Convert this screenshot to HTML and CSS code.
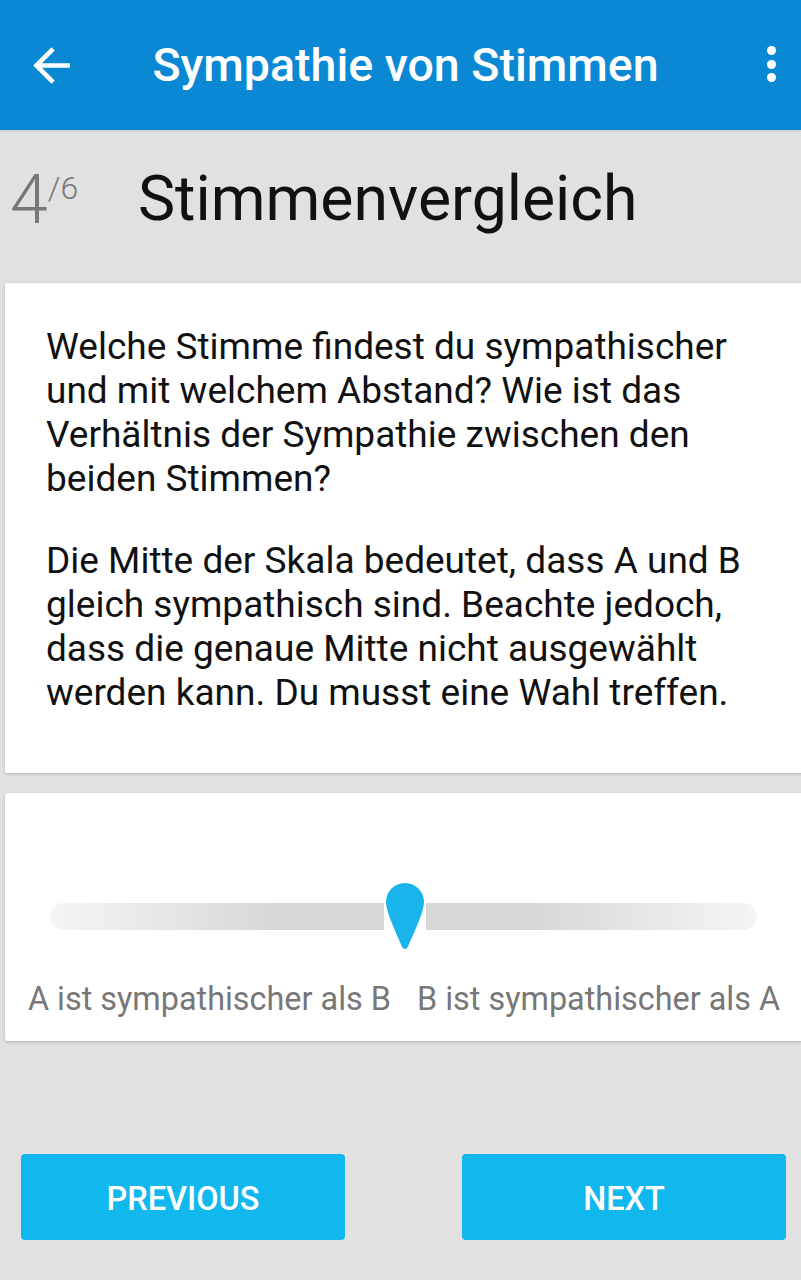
FILE: index.html
```html
<!DOCTYPE html>
<html lang="de">
<head>
<meta charset="utf-8">
<title>Sympathie von Stimmen</title>
<link rel="stylesheet" href="styles.css">
</head>
<body>
<header class="appbar">
  <div class="appbar-side">
    <svg class="icon-back" viewBox="0 0 24 24" width="55" height="55"><path fill="#fff" d="M20 11H7.83l5.59-5.59L12 4l-8 8 8 8 1.41-1.41L7.83 13H20v-2z"/></svg>
  </div>
  <h1 class="appbar-title">Sympathie von Stimmen</h1>
  <div class="appbar-side appbar-right">
    <span class="dots"><i></i><i></i><i></i></span>
  </div>
</header>

<div class="step-row">
  <div class="step"><span class="step-num">4</span><span class="step-total">/6</span></div>
  <h2 class="step-title">Stimmenvergleich</h2>
</div>

<section class="card card-text">
  <p>Welche Stimme findest du sympathischer<br>und mit welchem Abstand? Wie ist das<br>Verhältnis der Sympathie zwischen den<br>beiden Stimmen?</p>
  <p>Die Mitte der Skala bedeutet, dass A und B<br>gleich sympathisch sind. Beachte jedoch,<br>dass die genaue Mitte nicht ausgewählt<br>werden kann. Du musst eine Wahl treffen.</p>
</section>

<section class="card card-slider">
  <div class="slider">
    <div class="track"></div>
    <svg class="thumb" viewBox="-2 0 42 67" width="42" height="67">
      <rect x="-2" y="20" width="42" height="27" fill="#fff"/>
      <path fill="#1ab4ec" d="M19 0C29.5 0 38 8.5 38 19C38 30 24.5 57 21.8 64C20.8 66.6 17.2 66.6 16.2 64C13.5 57 0 30 0 19C0 8.5 8.5 0 19 0Z"/>
    </svg>
  </div>
  <div class="labels">
    <span class="label-left">A ist sympathischer als B</span>
    <span class="label-right">B ist sympathischer als A</span>
  </div>
</section>

<nav class="buttons">
  <button class="btn">PREVIOUS</button>
  <button class="btn">NEXT</button>
</nav>
</body>
</html>
```

FILE: styles.css
```css
html, body {
  margin: 0;
  padding: 0;
}
body {
  width: 801px;
  height: 1280px;
  overflow: hidden;
  background: #e1e1e1;
  font-family: Roboto, "Noto Sans", "Liberation Sans", sans-serif;
}

.appbar {
  height: 130px;
  background: #0a88d3;
  display: flex;
  align-items: center;
  box-shadow: 0 1px 2px rgba(0,0,0,0.12);
}
.appbar-side {
  width: 80px;
  height: 130px;
  display: flex;
  align-items: center;
}
.icon-back {
  display: block;
  margin-left: 24px;
}
.appbar-right {
  justify-content: flex-end;
}
.dots {
  display: flex;
  flex-direction: column;
  gap: 4.5px;
  margin-right: 25px;
  margin-top: -2px;
}
.dots i {
  display: block;
  width: 9px;
  height: 9px;
  border-radius: 50%;
  background: #fff;
}
.appbar-title {
  flex: 1;
  margin: 0;
  padding-left: 10px;
  text-align: center;
  color: #fff;
  font-weight: 500;
  font-size: 46.5px;
  line-height: 1;
}

.step-row {
  height: 153px;
  display: flex;
  align-items: center;
}
.step {
  width: 138px;
  padding-left: 10px;
  box-sizing: border-box;
  color: #777;
  font-weight: 300;
  display: flex;
  align-items: flex-start;
  margin-top: -14px;
}
.step-num {
  font-size: 68px;
  line-height: 1;
}
.step-total {
  font-size: 32px;
  line-height: 1;
  margin-top: 6px;
}
.step-title {
  margin: 0;
  margin-top: -14px;
  font-weight: 400;
  font-size: 62.5px;
  line-height: 1;
  color: #111;
}

.card {
  background: #fff;
  margin-left: 5px;
  width: 798px;
  box-sizing: border-box;
  border-radius: 2px;
  box-shadow: 0 1px 3px rgba(0,0,0,0.22);
}
.card-text {
  height: 490px;
  padding: 42px 0 0 41px;
  color: #111;
  font-size: 37px;
  line-height: 44px;
}
.card-text p {
  margin: 0 0 38px 0;
}

.card-slider {
  margin-top: 20px;
  height: 248px;
  padding-top: 90px;
}
.slider {
  position: relative;
  margin-left: 45px;
  width: 707px;
  height: 67px;
}
.track {
  position: absolute;
  left: 0;
  right: 0;
  top: 20px;
  height: 27px;
  border-radius: 14px;
  background: linear-gradient(to right, #f5f5f5 0%, #d7d7d7 32%, #d7d7d7 68%, #f5f5f5 100%);
}
.thumb {
  position: absolute;
  left: 334px;
  top: 0;
  display: block;
}
.labels {
  display: grid;
  grid-template-columns: 1fr 1fr;
  column-gap: 26px;
  margin-top: 29px;
  color: #777;
  font-size: 32.4px;
  line-height: 40px;
}
.label-left { text-align: right; }
.label-right { text-align: left; }

.buttons {
  display: flex;
  justify-content: space-between;
  padding: 0 15px 0 21px;
  margin-top: 113px;
}
.btn {
  width: 324px;
  height: 86px;
  border: 0;
  border-radius: 4px;
  background: #10b8ee;
  color: #fff;
  font-family: Roboto, "Noto Sans", "Liberation Sans", sans-serif;
  font-weight: 500;
  font-size: 32.5px;
  padding: 4px 0 0 0;
}
```
